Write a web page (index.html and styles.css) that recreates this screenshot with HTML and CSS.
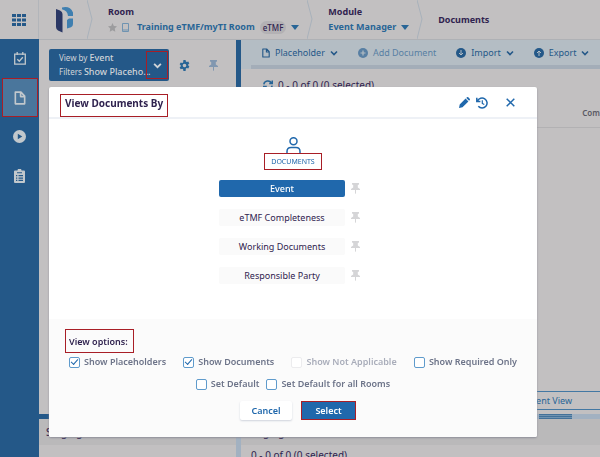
FILE: index.html
```html
<!DOCTYPE html>
<html lang="en">
<head>
  <meta charset="utf-8">
  <meta name="viewport" content="width=device-width, initial-scale=1">
  <title>Event Manager - Documents</title>
  <link rel="stylesheet" href="styles.css">
</head>
<body>
  <svg class="sprite" aria-hidden="true">
    <symbol id="chevron" viewBox="0 0 8 8"><path d="M1 2.5 4 5.5 7 2.5" fill="none" stroke="currentColor" stroke-width="1.6"/></symbol>
    <symbol id="caret" viewBox="0 0 8 8"><path d="M0 2h8L4 7z" fill="currentColor"/></symbol>
    <symbol id="file" viewBox="0 0 10 12"><path d="M1 1h4.8L9 4.4V11H1zM5.5 1v3.8H9" fill="none" stroke="currentColor" stroke-width="1.4" stroke-linejoin="round"/></symbol>
    <symbol id="pin" viewBox="0 0 9 11"><path d="M1 0h7v1.6L6.8 2v2.4L9 6v1H0V6l2.200-1.600V2L1 1.600zM4 7h1v3.200l-.5.800-.5-.8z" fill="currentColor"/></symbol>
  </svg>

  <div class="app">
    <nav class="sidebar">
      <a href="#" class="side-link side-apps" aria-label="Apps">
        <svg width="14" height="12" viewBox="0 0 14 12" fill="currentColor"><path d="M0 0h4v3H0zM5 0h4v3H5zM10 0h4v3h-4zM0 4.500h4v3H0zM5 4.500h4v3H5zM10 4.500h4v3h-4zM0 9h4v3H0zM5 9h4v3H5zM10 9h4v3h-4z"/></svg>
      </a>
      <a href="#" class="side-link" aria-label="Tasks">
        <svg width="12" height="13" viewBox="0 0 12 13" fill="none" stroke="currentColor" stroke-width="1.3"><path d="M.7 2.200h10.600v10H.7zM3.200 0v3M8.800 0v3M3.300 7.200l2 2 3.500-4"/></svg>
      </a>
      <a href="#" class="side-link active marked" aria-label="Documents">
        <svg width="12" height="14"><use href="#file"/></svg>
      </a>
      <a href="#" class="side-link" aria-label="Run">
        <svg width="13" height="13" viewBox="0 0 13 13"><path fill="currentColor" fill-rule="evenodd" d="M6.500 0a6.500 6.500 0 1 1 0 13 6.500 6.500 0 0 1 0-13zM4.800 3.700v5.600l4.500-2.800z"/></svg>
      </a>
      <a href="#" class="side-link" aria-label="Reports">
        <svg width="11" height="14" viewBox="0 0 11 14"><path fill="currentColor" fill-rule="evenodd" d="M1 1.500h2.500a2 2 0 0 1 4 0H10a1 1 0 0 1 1 1V13a1 1 0 0 1-1 1H1a1 1 0 0 1-1-1V2.500a1 1 0 0 1 1-1zM3 3.200v1h5v-1zM2 6v1.300h1.300V6zM4.500 6v1.300H9V6zM2 8.400v1.300h1.300V8.400zM4.500 8.400v1.300H9V8.400zM2 10.800v1.200h1.300v-1.200zM4.500 10.800v1.200H9v-1.200z"/></svg>
      </a>
    </nav>

    <div class="page">
      <header class="topbar">
        <div class="logo">
          <svg width="18" height="26" viewBox="0 0 18 26"><path fill="#2a3765" d="M0 2l4 1.500q2.500 1 2.500 3.500v18.500L2 23.500Q0 22.500 0 20z"/><path fill="#3f7fb0" d="M6 .5Q14-1.500 17 5.500V9h-5Q11.500 3.500 6 2.200zM11 13l2-1.500h4V17q0 2.500-2 3.200L11 21.500z"/></svg>
        </div>
        <svg class="crumb-sep" viewBox="0 0 6 39"><path d="M0 0 5 19 0 39" fill="none" stroke="#a8b1bb"/></svg>
        <div class="crumb">
          <span class="crumb-label">Room</span>
          <span class="crumb-value">
            <svg class="dim" width="9" height="9" viewBox="0 0 10 10"><path fill="currentColor" d="M5 0l1.500 3.200 3.500.5-2.500 2.500.6 3.600L5 8 1.900 9.800l.6-3.600L0 3.700l3.500-.5z"/></svg>
            <svg class="tablet" width="7" height="9" viewBox="0 0 7 9"><path fill="none" stroke="currentColor" d="M.5.5h6v8h-6zM.5 7h6"/></svg>
            <a href="#" class="room-name">Training eTMF/myTI Room</a>
            <span class="tag">eTMF</span>
            <svg width="8" height="8"><use href="#caret"/></svg>
          </span>
        </div>
        <svg class="crumb-sep" viewBox="0 0 6 39"><path d="M0 0 5 19 0 39" fill="none" stroke="#a8b1bb"/></svg>
        <div class="crumb">
          <span class="crumb-label">Module</span>
          <span class="crumb-value">
            <a href="#">Event Manager</a>
            <svg width="8" height="8"><use href="#caret"/></svg>
          </span>
        </div>
        <svg class="crumb-sep" viewBox="0 0 6 39"><path d="M0 0 5 19 0 39" fill="none" stroke="#a8b1bb"/></svg>
        <div class="crumb"><span class="crumb-label">Documents</span></div>
      </header>

      <main class="panes">
        <section class="left-pane">
          <div class="view-by">
            <div class="view-text">
              <div>View by <b>Event</b></div>
              <div>Filters <b>Show Placeho...</b></div>
            </div>
            <button type="button" class="view-toggle marked" aria-label="Change view"><svg width="9" height="9"><use href="#chevron"/></svg></button>
          </div>
          <button type="button" class="icon-button" aria-label="Settings">
            <svg width="11" height="11" viewBox="0 0 12 12"><path fill="currentColor" fill-rule="evenodd" d="M4.800 0h2.400l.3 1.600 1.100.6 1.500-.6 1.200 2.100-1.200 1v1.400l1.200 1-1.200 2.100-1.500-.6-1.100.6L7.200 12H4.800l-.3-1.800-1.100-.6-1.500.6L.7 8.100l1.200-1V5.700l-1.200-1 1.200-2.100 1.500.6 1.100-.6zM6 4a2 2 0 1 0 0 4 2 2 0 0 0 0-4z"/></svg>
          </button>
          <button type="button" class="icon-button pale" aria-label="Pin"><svg width="9" height="11"><use href="#pin"/></svg></button>
        </section>
        <section class="right-pane">
          <div class="toolbar">
            <button type="button" class="tool"><svg width="8" height="10"><use href="#file"/></svg>Placeholder<svg width="8" height="8"><use href="#chevron"/></svg></button>
            <button type="button" class="tool" disabled><svg width="10" height="10" viewBox="0 0 10 10"><circle cx="5" cy="5" r="5" fill="currentColor"/><path d="M5 2.500v5M2.500 5h5" stroke="#b4bdc4" stroke-width="1.200"/></svg>Add Document</button>
            <button type="button" class="tool"><svg width="10" height="10" viewBox="0 0 10 10"><circle cx="5" cy="5" r="5" fill="currentColor"/><path d="M5 2v5M3 5l2 2 2-2" fill="none" stroke="#b4bdc4"/></svg>Import<svg width="8" height="8"><use href="#chevron"/></svg></button>
            <button type="button" class="tool"><svg width="10" height="10" viewBox="0 0 10 10"><circle cx="5" cy="5" r="5" fill="currentColor"/><path d="M5 8V3M3 5l2-2 2 2" fill="none" stroke="#b4bdc4"/></svg>Export<svg width="8" height="8"><use href="#chevron"/></svg></button>
          </div>
          <div class="count">
            <svg width="10" height="10" viewBox="0 0 10 10" fill="none" stroke="currentColor" stroke-width="1.500"><path d="M.8 4.300A4.200 4.200 0 0 1 8.500 3M9.300.5v3H6.200M9.200 5.700A4.200 4.200 0 0 1 1.500 7M.7 9.500v-3h3.100"/></svg>
            0 - 0 of 0 (0 selected)
          </div>
          <div class="columns">Com</div>
          <button type="button" class="event-view">Event View</button>
        </section>
      </main>

      <div class="splitter"><div class="splitter-left"></div><div class="splitter-right"><i></i></div></div>

      <div class="staging">
        <section class="staging-left"><h3>Staging</h3></section>
        <section class="staging-right"><h3>Staging</h3><p>0 - 0 of 0 (0 selected)</p></section>
      </div>
    </div>
  </div>

  <div class="overlay">
    <form class="modal" role="dialog" aria-labelledby="modal-title">
      <header class="modal-header">
        <h2 id="modal-title" class="marked">View Documents By</h2>
        <div class="modal-actions">
          <button type="button" class="icon-button" aria-label="Edit"><svg width="11" height="11" viewBox="0 0 11 11" fill="currentColor"><path d="M0 11l.7-3.500L6.600 1.600l2.800 2.800-5.900 5.900zM7.300.9l.6-.6q.7-.6 1.400 0l1.400 1.400q.6.700 0 1.400l-.6.600z"/></svg></button>
          <button type="button" class="icon-button" aria-label="History"><svg width="12" height="12" viewBox="0 0 12 12" fill="none" stroke="currentColor"><path stroke-width="1.500" d="M1.500 4A5 5 0 1 1 2.300 9.300M.8.800v3.600h3.600"/><path stroke-width="1.200" d="M6.300 3.200v3.200l2 1.200"/></svg></button>
          <button type="button" class="icon-button close" aria-label="Close"><svg width="9" height="9" viewBox="0 0 9 9"><path d="M.7.7l7.600 7.600M8.300.7.7 8.300" stroke="currentColor" stroke-width="1.500"/></svg></button>
        </div>
      </header>

      <div class="modal-body">
        <svg class="user" width="15" height="16" viewBox="0 0 15 16" fill="none" stroke="currentColor" stroke-width="1.500"><circle cx="7.500" cy="4.300" r="3.500"/><path d="M1 16v-1.500q0-4 4-4h5q4 0 4 4V16"/></svg>
        <div class="group-name marked">DOCUMENTS</div>
        <ul class="views">
          <li><button type="button" class="view selected">Event</button><svg width="9" height="11"><use href="#pin"/></svg></li>
          <li><button type="button" class="view">eTMF Completeness</button><svg width="9" height="11"><use href="#pin"/></svg></li>
          <li><button type="button" class="view">Working Documents</button><svg width="9" height="11"><use href="#pin"/></svg></li>
          <li><button type="button" class="view">Responsible Party</button><svg width="9" height="11"><use href="#pin"/></svg></li>
        </ul>
      </div>

      <div class="modal-footer">
        <h3 class="marked">View options:</h3>
        <div class="options">
          <label><input type="checkbox" checked>Show Placeholders</label>
          <label><input type="checkbox" checked>Show Documents</label>
          <label class="off"><input type="checkbox" disabled>Show Not Applicable</label>
          <label><input type="checkbox">Show Required Only</label>
        </div>
        <div class="options options-default">
          <label><input type="checkbox">Set Default</label>
          <label><input type="checkbox">Set Default for all Rooms</label>
        </div>
        <div class="buttons">
          <button type="button" class="button">Cancel</button>
          <button type="button" class="button primary marked">Select</button>
        </div>
      </div>
    </form>
  </div>
</body>
</html>
```

FILE: styles.css
```css
*, *::before, *::after {
  margin: 0;
  padding: 0;
  box-sizing: border-box;
}

body {
  background-color: #C2C0C1;
  color: #30234F;
  font: 9px/14px "Noto Sans", "Open Sans", sans-serif;
}

button {
  border: 0;
  background: none;
  color: inherit;
  font: inherit;
  cursor: pointer;
}

a {
  color: inherit;
  text-decoration: none;
}

svg {
  display: block;
  flex: none;
}

.sprite {
  position: absolute;
  width: 0;
  height: 0;
}

.marked {
  border: 1px solid #A81E26;
}

.app {
  display: flex;
  height: 100vh;
  overflow: hidden;
}

/* sidebar */
.sidebar {
  flex: none;
  width: 39px;
  background-color: #245888;
  color: #C2C8CC;
}

.side-link {
  display: flex;
  justify-content: center;
  align-items: center;
  height: 39px;
}

.side-apps {
  background-color: #C2C0C1;
  border-right: 1px solid #B2B5BA;
  color: #245888;
}

.side-link.active {
  margin: 0 1px 0 2px;
  background-color: #4A769C;
}

.page {
  flex: 1;
  min-width: 0;
  display: flex;
  flex-direction: column;
}

/* top bar */
.topbar {
  flex: none;
  display: flex;
  height: 40px;
  border-bottom: 1px solid #AFB1B5;
  white-space: nowrap;
}

.logo {
  display: flex;
  align-items: center;
  padding: 0 13px 0 17px;
}

.crumb-sep {
  width: 6px;
  height: 39px;
}

.crumb {
  display: flex;
  flex-direction: column;
  justify-content: center;
  gap: 1px;
  padding: 0 8px 0 15px;
}

.crumb-label {
  font-weight: 700;
}

.crumb-value {
  display: flex;
  align-items: center;
  gap: 5px;
  color: #286596;
  font-weight: 700;
}

.room-name {
  padding-left: 3px;
}

.dim {
  color: #9C9C9E;
}

.tablet {
  color: #6F93B1;
}

.tag {
  padding: 0 3px;
  border-radius: 7px;
  background-color: #B3B1B4;
  color: #30234F;
  font-size: 8px;
  font-weight: 500;
  line-height: 13px;
}

/* panes */
.panes {
  flex: 1;
  display: flex;
  min-height: 0;
}

.left-pane {
  flex: none;
  width: 202px;
  display: flex;
  align-items: flex-start;
  gap: 10px;
  padding: 9px 10px 0;
  border-right: 5px solid #245888;
  color: #286596;
}

.view-by {
  flex: 1;
  min-width: 0;
  display: flex;
  align-items: center;
  height: 32px;
  padding-right: 1px;
  border-radius: 2px;
  background-color: #245888;
  color: #D0D4D8;
}

.view-text {
  flex: 1;
  min-width: 0;
  padding-left: 10px;
  font-size: 8px;
  white-space: nowrap;
}

.view-text b {
  font-size: 9px;
  font-weight: 500;
}

.view-toggle {
  display: flex;
  justify-content: center;
  align-items: center;
  width: 22px;
  height: 28px;
}

.icon-button {
  display: flex;
  justify-content: center;
  align-items: center;
  color: inherit;
}

.left-pane .icon-button {
  height: 32px;
}

.left-pane .pale {
  width: 26px;
  color: #8197B0;
}

.right-pane {
  flex: 1;
  min-width: 0;
  display: flex;
  flex-direction: column;
}

.toolbar {
  display: flex;
  gap: 20px;
  height: 29px;
  padding: 0 10px 4px 21px;
  background: linear-gradient(#A3ADB8, #A3ADB8) 10px 100% / 100% 4px no-repeat #B4BDC4;
  color: #245888;
}

.tool {
  display: flex;
  align-items: center;
  gap: 5px;
  white-space: nowrap;
}

.tool:disabled {
  color: #587FA3;
}

.count {
  display: flex;
  align-items: center;
  gap: 5px;
  padding: 9px 22px 0;
  font-size: 10px;
  white-space: nowrap;
}

.count svg {
  color: #286596;
}

.columns {
  margin-top: 14px;
  padding-bottom: 7px;
  border-bottom: 1px solid #B2B1B3;
  color: #5A5964;
  font-size: 8px;
  font-weight: 600;
  text-align: right;
}

.event-view {
  margin-top: auto;
  margin-bottom: 4px;
  padding-right: 28px;
  border: 1px solid #4378A3;
  border-right: 0;
  color: #286596;
  line-height: 17px;
  text-align: right;
}

.splitter {
  flex: none;
  display: flex;
  height: 5px;
}

.splitter-left {
  width: 202px;
  background-color: #245888;
}

.splitter-right {
  flex: 1;
  display: flex;
  justify-content: flex-end;
  padding-right: 28px;
  background-color: #A2B1C1;
}

.splitter-right i {
  width: 33px;
  background: repeating-linear-gradient(#42719A 0 1px, #6F92B0 1px 2px);
}

.staging {
  flex: none;
  display: flex;
  height: 38px;
  overflow: hidden;
}

.staging-left {
  width: 202px;
  border-right: 5px solid #A2B1C1;
}

.staging-right {
  flex: 1;
}

.staging h3 {
  height: 26px;
  padding: 0 7px;
  background-color: #BAB9BA;
  font-size: 10px;
  font-weight: 500;
  line-height: 26px;
}

.staging p {
  padding: 3px 10px;
  font-size: 10px;
}

/* dialog */
.overlay {
  position: fixed;
  inset: 0;
  padding: 87px 63px 20px 49px;
}

.modal {
  border-radius: 2px;
  overflow: hidden;
  background-color: #FFFFFF;
  box-shadow: 0 1px 2px #8D8E98;
}

.modal-header {
  display: flex;
  justify-content: space-between;
  height: 32px;
  padding: 7px 22px 0 11px;
  border-bottom: 2px solid #EEF1F6;
}

.modal-header h2 {
  height: 23px;
  padding: 0 4px;
  font-size: 10px;
  font-weight: 700;
  line-height: 17px;
  white-space: nowrap;
}

.modal-actions {
  display: flex;
  gap: 6px;
  height: 17px;
  color: #2068AC;
}

.modal-actions .close {
  margin-left: 12px;
}

.modal-body {
  display: flex;
  flex-direction: column;
  align-items: center;
  padding: 18px 0 35px;
}

.user {
  color: #2068AC;
}

.group-name {
  padding: 0 6px;
  color: #2068AC;
  font-size: 7px;
  line-height: 15px;
}

.views {
  display: flex;
  flex-direction: column;
  gap: 12px;
  margin-top: 10px;
  padding-right: 7px;
  list-style: none;
  color: #D5D5D7;
}

.views li {
  display: flex;
  align-items: center;
  gap: 6px;
}

.view {
  width: 126px;
  border-radius: 2px;
  background-color: #FAFAFA;
  color: #30234F;
  line-height: 17px;
}

.view.selected {
  background-color: #2068AC;
  color: #FFFFFF;
  font-weight: 500;
}

.modal-footer {
  padding: 10px 20px 17px;
  background-color: #FBFBFB;
}

.modal-footer h3 {
  width: max-content;
  margin-left: -4px;
  padding: 1px 5px 0 3px;
  font-size: 9px;
  font-weight: 600;
  line-height: 21px;
}

.options {
  display: flex;
  justify-content: space-between;
  margin-top: 2px;
  color: #6D7489;
  font-weight: 600;
  white-space: nowrap;
}

.options-default {
  justify-content: center;
  gap: 7px;
  margin-top: 8px;
}

.options label {
  display: flex;
  align-items: center;
  gap: 4px;
}

.options .off {
  color: #A9ADBA;
}

.options input {
  display: grid;
  place-items: center;
  width: 11px;
  height: 11px;
  border: 1px solid #5F9BCC;
  border-radius: 2px;
  background-color: #FFFFFF;
  appearance: none;
}

.options input:disabled {
  border-color: #ECECEE;
}

.options input:checked::before {
  content: "";
  width: 7px;
  height: 4px;
  margin-bottom: 2px;
  border: solid #2068AC;
  border-width: 0 0 1px 1px;
  transform: rotate(-48deg);
}

.buttons {
  display: flex;
  justify-content: center;
  gap: 9px;
  margin-top: 10px;
  padding-left: 10px;
}

.button {
  width: 52px;
  border-radius: 2px;
  background-color: #FFFFFF;
  box-shadow: 0 1px 2px #CFD3DC;
  color: #2068AC;
  font-weight: 600;
  line-height: 17px;
}

.button.primary {
  width: 55px;
  border-radius: 0;
  background-color: #2068AC;
  box-shadow: none;
  color: #FFFFFF;
}
```
